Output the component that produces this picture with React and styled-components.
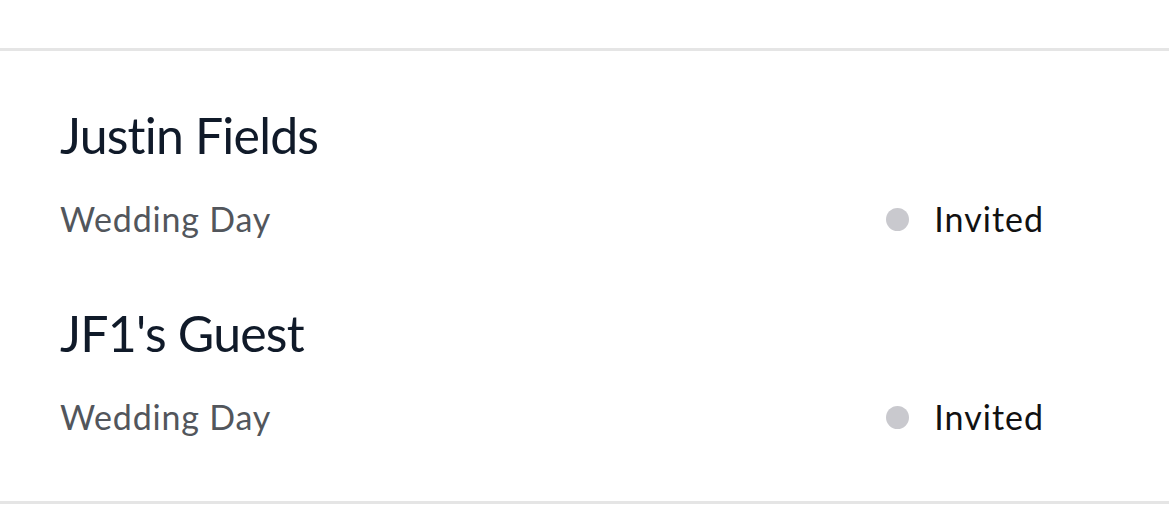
import React from 'react';
import styled, { createGlobalStyle } from 'styled-components';

const GlobalStyle = createGlobalStyle`
  body {
    margin: 0;
    background: #ffffff;
    font-family: Lato, "Noto Sans", sans-serif;
    font-variant-ligatures: none;
  }
`;

const Page = styled.div`
  padding-top: 48px;
`;

const List = styled.div`
  border-top: 3px solid #e5e5e5;
  border-bottom: 3px solid #e5e5e5;
  padding: 54px 125px 64px 60px;
  display: flex;
  flex-direction: column;
  gap: 64px;
`;

const Guest = styled.div`
  display: flex;
  flex-direction: column;
  gap: 34px;
`;

const Name = styled.div`
  font-size: 50px;
  line-height: 60px;
  letter-spacing: -0.8px;
  color: #101a29;
`;

const Meta = styled.div`
  display: flex;
  align-items: center;
  justify-content: space-between;
`;

const Event = styled.div`
  font-size: 34px;
  line-height: 40px;
  letter-spacing: 0.8px;
  color: #52565c;
`;

const Status = styled.div`
  display: flex;
  align-items: center;
  gap: 25px;
  font-size: 34px;
  line-height: 40px;
  letter-spacing: 1px;
  color: #111111;
`;

const Dot = styled.span`
  width: 23px;
  height: 23px;
  border-radius: 50%;
  background: ${(p) => p.color || '#c9c9ce'};
`;

const guests = [
  { name: 'Justin Fields', event: 'Wedding Day', status: 'Invited' },
  { name: "JF1's Guest", event: 'Wedding Day', status: 'Invited' },
];

const App = () => {
  return (
    <Page>
      <GlobalStyle />
      <List>
        {guests.map((g) => (
          <Guest key={g.name}>
            <Name>{g.name}</Name>
            <Meta>
              <Event>{g.event}</Event>
              <Status>
                <Dot />
                {g.status}
              </Status>
            </Meta>
          </Guest>
        ))}
      </List>
    </Page>
  );
};

export default App;
